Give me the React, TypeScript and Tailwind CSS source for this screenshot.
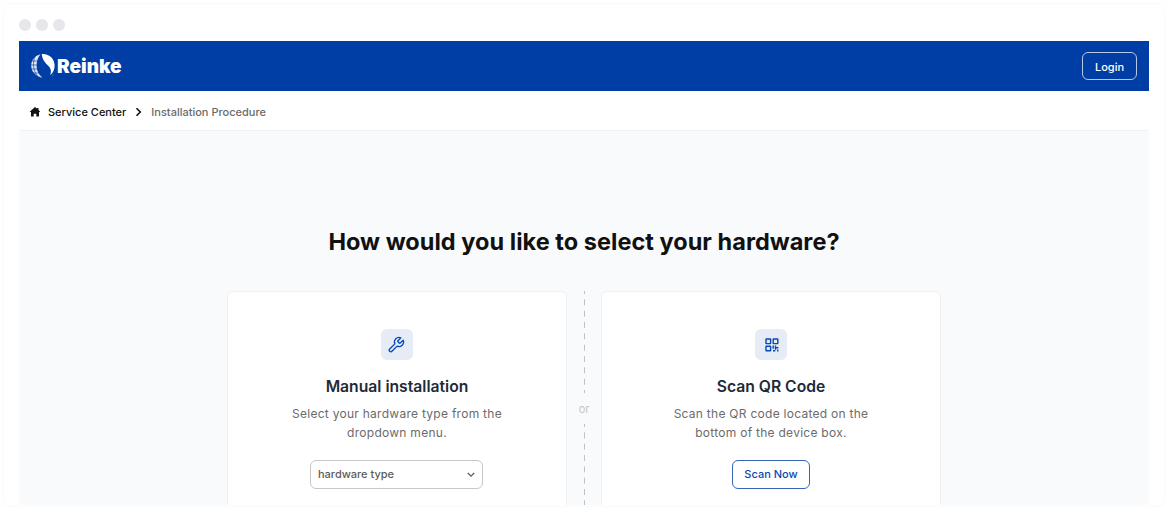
import type { ReactNode } from "react";

function Logo() {
  return (
    <div className="flex items-center">
      <svg width="24" height="26" viewBox="0 0 24 26" fill="none">
        <path d="M9.500 1.300C3.800 2.700.2 7.300.2 12.800c0 5.700 4.300 10.600 11.200 11.900C7.800 21.800 5.600 17.800 5.600 13c0-4.600 1.300-8.600 3.900-11.700Z" fill="#fff" fillOpacity=".88" />
        <path d="M0 8h8M0 12h8M0 16h8M2 20h8M4 3.500c-2.300 5.500-2.300 13.500 2.300 19.500" stroke="#003da5" strokeWidth=".65" />
        <path d="M10.800 1C18 .4 23.600 5.600 23.600 12.500c0 4.100-1.500 7.300-4.400 9.500 1.400-3.300.9-6.200-1.700-8.900-3.600-3.700-6.300-6.500-6.700-12.100Z" fill="#fff" />
        <circle cx="21.800" cy="22" r=".5" fill="#fff" fillOpacity=".7" />
      </svg>
      <span className="mt-[2px] ml-[2px] font-[Inter] text-[19px] leading-6 font-black text-white">
        Reinke
      </span>
    </div>
  );
}

function WrenchIcon() {
  return (
    <svg className="mr-[2px]" width="18" height="18" viewBox="0 0 24 24" fill="none" stroke="#0a47b5" strokeWidth="1.800" strokeLinecap="round" strokeLinejoin="round">
      <path d="M14.700 6.300a1 1 0 0 0 0 1.400l1.600 1.600a1 1 0 0 0 1.400 0l3.770-3.770a6 6 0 0 1-7.940 7.940l-6.910 6.910a2.120 2.120 0 0 1-3-3l6.910-6.910a6 6 0 0 1 7.940-7.940l-3.760 3.760z" />
    </svg>
  );
}

function QrIcon() {
  return (
    <svg className="ml-px" width="14" height="14" viewBox="0 0 14 14" fill="none">
      <g stroke="#0a47b5" strokeWidth="1.400">
        <rect x="1" y="1" width="4.600" height="4.600" rx=".3" />
        <rect x="8.200" y="1" width="4.600" height="4.600" rx=".3" />
        <rect x="1" y="8.200" width="4.600" height="4.600" rx=".3" />
      </g>
      <path d="M7.500 7.500h1.400v3.300H7.500zM9.800 7.500h1.400v1.600h2.200v1.400h-2.200v1.200H9.800zM8 12h2.300v1.400H8zM12 11.600h1.400v1.800H12z" fill="#0a47b5" />
    </svg>
  );
}

function Dashes() {
  return (
    <svg width="1" height="102" viewBox="0 0 1 102">
      <path d="M.5 0v102" stroke="#bfc2c6" strokeDasharray="6 5.333" strokeDashoffset="3" />
    </svg>
  );
}

function Card({ icon, title, lines, children }: { icon: ReactNode; title: string; lines: string[]; children: ReactNode }) {
  return (
    <section className="flex h-[260px] w-[340px] flex-col items-center rounded-md border border-[#f0f1f3] bg-white pt-[37px]">
      <div className="flex h-[31px] w-8 items-center justify-center rounded-md bg-[#e5ecf6]">{icon}</div>
      <h2 className="mt-[15px] text-[15.700px] leading-6 font-semibold text-[#1f2a37]">{title}</h2>
      <p className="mt-[5px] text-center text-[12px] leading-[19px] tracking-[0.270px] text-[#6b6b6b]">
        {lines[0]}
        <br />
        {lines[1]}
      </p>
      {children}
    </section>
  );
}

export default function App() {
  return (
    <div className="h-[510px] w-[1168px] overflow-hidden bg-white px-[3px] pt-[3px] font-[Inter,sans-serif]">
      <div className="h-[504px] overflow-hidden rounded-md border border-[#fafafa] bg-white px-[15px]">
        <div className="flex h-[37px] items-center gap-[5px] pt-[5px]">
          <span className="size-3 rounded-full bg-[#e5e7eb]" />
          <span className="size-3 rounded-full bg-[#e5e7eb]" />
          <span className="size-3 rounded-full bg-[#e5e7eb]" />
        </div>

        <header className="flex h-[50px] items-center justify-between bg-[#003da5] pr-3 pl-3">
          <Logo />
          <button className="h-7 w-[55px] rounded-md border border-[#b5c8e6] pt-[2px] text-[11px] leading-none font-medium text-white">
            Login
          </button>
        </header>

        <nav className="flex h-10 items-center border-b border-[#f1f2f4] pt-[3px] pl-[11px] text-[11px] font-medium">
          <svg width="10" height="10" viewBox="0 0 10 10" fill="#111">
            <path d="M5 0 .2 4.300c-.3.300-.1.700.2.700H1v3.900c0 .4.200.6.600.6h2.100V6.700h2.600v2.800h2.100c.4 0 .6-.2.600-.6V5h.6c.400 0 .5-.4.200-.7L8.500 3V1H7.200v.8z" />
          </svg>
          <span className="ml-2 text-[#111]">Service Center</span>
          <svg className="ml-[9px]" width="7" height="10" viewBox="0 0 7 10" fill="none" stroke="#111" strokeWidth="1.600">
            <path d="m1.500 1.200 3.800 3.800-3.800 3.800" />
          </svg>
          <span className="ml-[9px] text-[#6b6b6b]">Installation Procedure</span>
        </nav>

        <main className="flex h-[374px] flex-col items-center overflow-hidden bg-[#f9fafc] pt-[95px]">
          <h1 className="text-[23.500px] leading-8 font-bold tracking-[0.030px] text-[#111]">
            How would you like to select your hardware?
          </h1>
          <div className="mt-[33px] flex">
            <Card icon={<WrenchIcon />} title="Manual installation" lines={["Select your hardware type from the", "dropdown menu."]}>
              <button className="mt-[18px] mr-px flex h-[29px] w-[173px] items-center justify-between rounded-md border border-[#c7c7c7] px-[7px] text-[11px] font-medium text-[#5c5c5c]">
                hardware type
                <svg width="8" height="6" viewBox="0 0 8 6" fill="none" stroke="#5c5c5c" strokeWidth="1.300">
                  <path d="m.8 1 3.200 3.200L7.200 1" />
                </svg>
              </button>
            </Card>
            <div className="flex w-[34px] flex-col items-center">
              <Dashes />
              <span className="h-[31px] text-[11px] leading-[33px] text-[#c4c6ca]">or</span>
              <Dashes />
            </div>
            <Card icon={<QrIcon />} title="Scan QR Code" lines={["Scan the QR code located on the", "bottom of the device box."]}>
              <button className="mt-[18px] h-[29px] w-[78px] rounded-md border border-[#3566b8] text-[11px] font-medium text-[#0a47b5]">
                Scan Now
              </button>
            </Card>
          </div>
        </main>
      </div>
    </div>
  );
}
